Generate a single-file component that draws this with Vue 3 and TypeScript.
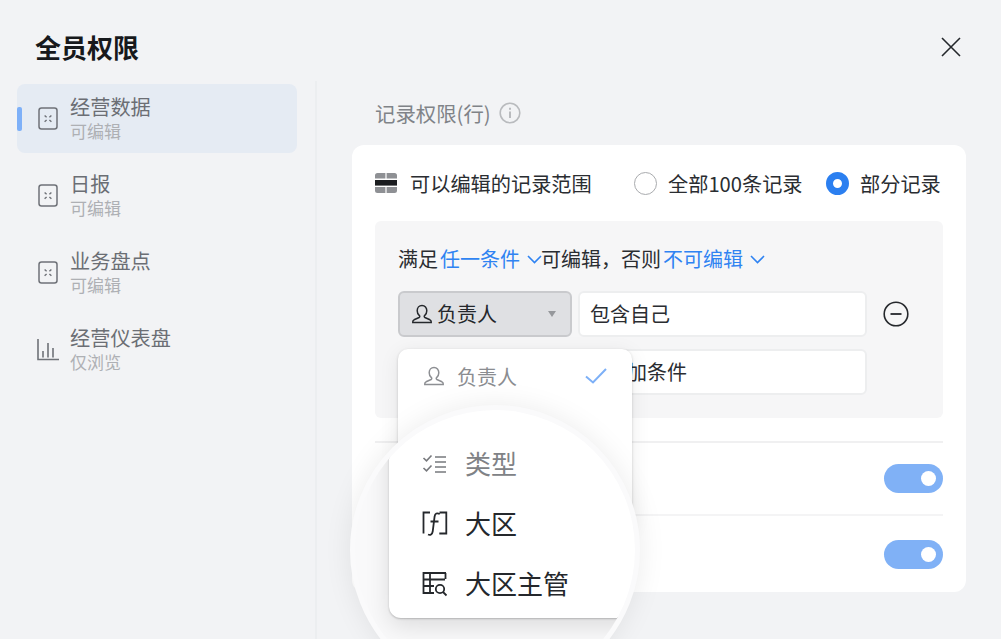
<script setup lang="ts">
interface NavItem { title: string; sub: string; icon: 'sheet' | 'chart'; active?: boolean }
const nav: NavItem[] = [
  { title: '经营数据', sub: '可编辑', icon: 'sheet', active: true },
  { title: '日报', sub: '可编辑', icon: 'sheet' },
  { title: '业务盘点', sub: '可编辑', icon: 'sheet' },
  { title: '经营仪表盘', sub: '仅浏览', icon: 'chart' },
]
const personPath = 'M10 1.500c-2.900 0-4.800 2.200-4.800 5.200 0 2.100 1 3.900 2.200 4.900.6.500.4 1.500-.3 1.900l-5 2.300c-.8.400-1.300 1-1.300 1.900v.8h18.400v-.8c0-.9-.5-1.500-1.300-1.900l-5-2.300c-.7-.4-.9-1.400-.3-1.900 1.200-1 2.200-2.800 2.200-4.900 0-3-1.900-5.200-4.800-5.200z'
</script>

<template>
  <div class="page">
    <header class="head">
      <h1 class="title">全员权限</h1>
      <svg class="close" width="20" height="20" viewBox="0 0 20 20" fill="none" stroke="#24272b" stroke-width="1.6"><path d="M1 1l18 18M19 1L1 19" /></svg>
    </header>
    <div class="body">
      <aside class="side">
        <div v-for="n in nav" :key="n.title" class="nav" :class="{ active: n.active }">
          <i v-if="n.active" class="mark"></i>
          <svg v-if="n.icon === 'sheet'" class="nav-ico" width="20" height="23" viewBox="0 0 20 23" fill="none" stroke="#6f7278">
            <rect x="1" y="1" width="18" height="21" rx="2.5" stroke-width="1.5" />
            <path d="M6.600 8.400l2 1.800M13.400 8.400l-2 1.800M6.600 14.800l2-1.800M13.400 14.800l-2-1.800" stroke-width="1.4" />
          </svg>
          <svg v-else class="nav-ico" width="22" height="22" viewBox="0 0 22 22" fill="none" stroke="#6f7278" stroke-width="1.6">
            <path d="M1 0v20.500h21M6 12v6.500M11 4v14.500M16 9v9.500" />
          </svg>
          <div class="nav-text">
            <div class="nav-title">{{ n.title }}</div>
            <div class="nav-sub">{{ n.sub }}</div>
          </div>
        </div>
      </aside>
      <main class="main">
        <div class="sec-title">
          <span>记录权限(行)</span>
          <svg width="22" height="22" viewBox="0 0 22 22" fill="none" stroke="#b9bbbe" stroke-width="1.6">
            <circle cx="11" cy="11" r="9.800" />
            <path d="M11 9.500v6.500M11 5.800v2" stroke-width="2" />
          </svg>
        </div>
        <section class="card">
          <div class="scope">
            <svg class="scope-ico" width="22" height="20" viewBox="0 0 22 20">
              <path d="M2.500 0h7.900v5.600H0V2.500A2.500 2.500 0 0 1 2.500 0zM11.600 0h7.900A2.500 2.500 0 0 1 22 2.500v3.100H11.600zM0 14h10.400v6H2.500A2.500 2.500 0 0 1 0 17.500zM11.600 14H22v3.500a2.500 2.500 0 0 1-2.500 2.500h-7.900z" fill="#8e9094" />
              <rect x="0" y="7" width="22" height="5.600" fill="#1b1d20" />
            </svg>
            <span class="scope-label">可以编辑的记录范围</span>
            <span class="radio"></span>
            <span class="radio-label first">全部100条记录</span>
            <span class="radio on"></span>
            <span class="radio-label">部分记录</span>
          </div>
          <div class="cond">
            <div class="rule">
              满足<span class="link">任一条件</span>
              <svg class="chev" width="15" height="9" viewBox="0 0 15 9" fill="none" stroke="#2f83f2" stroke-width="1.6"><path d="M1 1l6.500 6.500L14 1" /></svg>
              可编辑，否则<span class="link">不可编辑</span>
              <svg class="chev2" width="15" height="9" viewBox="0 0 15 9" fill="none" stroke="#2f83f2" stroke-width="1.600"><path d="M1 1l6.500 6.500L14 1" /></svg>
            </div>
            <div class="row">
              <div class="select">
                <svg width="20" height="20" viewBox="0 0 20 20" fill="none" stroke="#25282c" stroke-width="1.500"><path :d="personPath" /></svg>
                <span class="sel-text">负责人</span>
                <i class="caret"></i>
              </div>
              <div class="input">包含自己</div>
              <svg class="minus" width="26" height="26" viewBox="0 0 26 26" fill="none" stroke="#25282c" stroke-width="1.600">
                <circle cx="13" cy="13" r="11.800" />
                <path d="M7.500 13h11" stroke-width="1.800" />
              </svg>
            </div>
            <div class="row">
              <div class="select ghost"></div>
              <div class="input add">添加条件</div>
            </div>
          </div>
          <div class="opt"><span class="toggle"><i></i></span></div>
          <div class="opt"><span class="toggle"><i></i></span></div>
        </section>
        <div class="sec-title next"><span>字段权限(列)</span></div>
      </main>
    </div>

    <div class="drop">
      <div class="drop-row">
        <svg width="20" height="20" viewBox="0 0 20 20" fill="none" stroke="#8d8f93" stroke-width="1.500"><path :d="personPath" /></svg>
        <span class="drop-text">负责人</span>
        <svg class="check" width="22" height="16" viewBox="0 0 22 16" fill="none" stroke="#7db0f7" stroke-width="2"><path d="M1 8.500l7 6L21 1" /></svg>
      </div>
    </div>

    <div class="lens">
      <div class="lens-menu">
        <div class="lens-row muted">
          <svg width="26" height="20" viewBox="0 0 26 20" fill="none" stroke="#77797d" stroke-width="1.600">
            <path d="M1.500 4l3 2.800L9.500 1.500M1.500 14l3 2.800 5-5.300M13 3h11M13 8h11M13 13h11M13 18h11" />
          </svg>
          <span>类型</span>
        </div>
        <div class="lens-row">
          <svg width="26" height="26" viewBox="0 0 26 26" fill="none" stroke="#25282c" stroke-width="1.800">
            <path d="M8 1.500H1.500v21M17.500 1.500h6.800v21h-7" />
            <path d="M17.800 3c-2.800-1.500-4.700-.5-5.200 2.500L10.700 20.500c-.5 3-2.400 4-4.700 3M8.500 10.500h8" />
          </svg>
          <span>大区</span>
        </div>
        <div class="lens-row">
          <svg width="26" height="26" viewBox="0 0 26 26" fill="none" stroke="#25282c" stroke-width="1.800">
            <path d="M24 2H1.500v20H12M1.500 8.500H14M1.500 15H12M8 2v20M14 8.500h9M23.500 2v6" />
            <circle cx="18" cy="18" r="4.200" />
            <path d="M21 21l3.500 3.500" />
          </svg>
          <span>大区主管</span>
        </div>
      </div>
    </div>
  </div>
</template>

<style>
html, body { margin: 0; overflow: hidden; }
</style>

<style scoped>
.page {
  position: relative;
  width: 1001px;
  height: 639px;
  overflow: hidden;
  background: #f2f3f5;
  font-family: "Noto Sans CJK SC", "Noto Sans", sans-serif;
  color: #24272b;
}
.head {
  height: 81px;
  padding: 13px 40px 0 35px;
  box-sizing: border-box;
  display: flex;
  align-items: center;
  justify-content: space-between;
}
.title {
  margin: 0;
  font-size: 26px;
  line-height: 36px;
  font-weight: 700;
  color: #17191c;
}
.body { display: flex; height: 558px; }
.side {
  flex: none;
  width: 317px;
  box-sizing: border-box;
  padding: 3px 18px 0 17px;
  border-right: 2px solid #eceef0;
  display: flex;
  flex-direction: column;
  gap: 8px;
}
.nav {
  position: relative;
  height: 69px;
  box-sizing: border-box;
  border-radius: 8px;
  display: flex;
  align-items: center;
  padding-left: 20px;
}
.nav.active { background: #e5ebf3; }
.mark {
  position: absolute;
  left: 0;
  top: 23px;
  width: 5px;
  height: 24px;
  border-radius: 2px;
  background: #7eb0f8;
}
.nav-ico { flex: none; width: 22px; }
.nav-text { margin: 0 0 2px 11px; }
.nav-title { font-size: 20.200px; line-height: 26px; color: #6b6e74; }
.nav-sub { font-size: 17px; line-height: 22px; color: #aeb0b4; }
.main { flex: 1; min-width: 0; padding: 0 35px; }
.sec-title {
  height: 64px;
  padding: 0 0 1px 23px;
  box-sizing: border-box;
  display: flex;
  align-items: center;
  gap: 8px;
  font-size: 20.400px;
  color: #808388;
}
.sec-title.next { height: 30px; margin-top: 37px; padding-top: 10px; align-items: flex-start; }
.card {
  height: 447px;
  box-sizing: border-box;
  padding: 0 23px;
  background: #fff;
  border-radius: 12px;
}
.scope {
  height: 76px;
  display: flex;
  align-items: center;
  font-size: 20.200px;
  color: #2a2d31;
}
.scope-ico { flex: none; }
.scope-label { flex: none; margin-left: 13px; width: 224px; }
.radio {
  flex: none;
  width: 23px;
  height: 23px;
  box-sizing: border-box;
  border: 1.500px solid #a9abae;
  border-radius: 50%;
  background: #fff;
}
.radio.on { border: 7.500px solid #2b7ff0; }
.radio-label { flex: none; margin-left: 11px; white-space: nowrap; }
.radio-label.first { width: 134px; margin-right: 24px; }
.cond {
  height: 197px;
  box-sizing: border-box;
  padding: 24px 23px 0;
  background: #f6f6f7;
  border-radius: 6px;
}
.rule {
  height: 28px;
  display: flex;
  align-items: center;
  font-size: 20px;
  line-height: 28px;
  color: #2a2d31;
  white-space: nowrap;
}
.link { color: #2f83f2; margin-left: 2px; }
.chev { margin: 0 -1px 0 7px; }
.chev2 { margin-left: 7px; }
.row { display: flex; align-items: center; gap: 6px; margin-top: 12px; }
.rule + .row { margin-top: 18px; }
.select {
  flex: none;
  width: 174px;
  height: 46px;
  box-sizing: border-box;
  padding: 0 14px 0 12px;
  background: #dfe0e3;
  border: 2px solid #c9cacd;
  border-radius: 6px;
  display: flex;
  align-items: center;
  font-size: 20px;
}
.select.ghost { visibility: hidden; }
.sel-text { margin: 0 0 2px 5px; flex: 1; }
.caret {
  width: 0;
  height: 0;
  border-left: 4px solid transparent;
  border-right: 4px solid transparent;
  border-top: 6px solid #96989c;
}
.input {
  flex: none;
  width: 289px;
  height: 46px;
  box-sizing: border-box;
  padding: 0 0 2px 10px;
  background: #fff;
  border: 2px solid #edeeef;
  border-radius: 6px;
  display: flex;
  align-items: center;
  font-size: 20px;
  color: #2a2d31;
}
.input.add { padding-left: 27px; }
.minus { margin-left: 10px; }
.opt {
  height: 76px;
  display: flex;
  align-items: center;
  justify-content: flex-end;
  box-sizing: border-box;
}
.cond + .opt {
  margin-top: 23px;
  height: 75px;
  border-top: 2px solid #f0f0f1;
  border-bottom: 2px solid #f4f4f5;
}
.toggle {
  position: relative;
  width: 59px;
  height: 29px;
  border-radius: 15px;
  background: #80b1f6;
}
.toggle i {
  position: absolute;
  right: 7px;
  top: 7px;
  width: 15px;
  height: 15px;
  border-radius: 50%;
  background: #fff;
}
.drop {
  position: absolute;
  left: 398px;
  top: 349px;
  width: 234px;
  height: 180px;
  box-sizing: border-box;
  background: #fff;
  border-radius: 10px;
  box-shadow: 0 1px 3px rgba(0, 0, 0, .18), 0 4px 20px rgba(0, 0, 0, .08);
}
.drop-row {
  height: 54px;
  display: flex;
  align-items: center;
  padding: 0 25px 0 26px;
}
.drop-text { margin-left: 13px; flex: 1; font-size: 20px; color: #8b8d91; }
.lens {
  position: absolute;
  left: 350px;
  top: 405px;
  width: 290px;
  height: 290px;
  box-sizing: border-box;
  border: 5px solid #fafafb;
  border-radius: 50%;
  background: #f9f9fa;
  overflow: hidden;
  box-shadow: 0 0 28px rgba(0, 0, 0, .08);
}
.lens-menu {
  position: absolute;
  left: 34px;
  top: -10px;
  width: 300px;
  height: 218px;
  box-sizing: border-box;
  padding: 34px 0 0 33px;
  background: #fff;
  border-radius: 12px;
  box-shadow: 0 1px 2px rgba(0, 0, 0, .22), 0 8px 24px rgba(0, 0, 0, .12);
}
.lens-row {
  height: 60px;
  display: flex;
  align-items: center;
  font-size: 26px;
  color: #25282c;
}
.lens-row svg { flex: none; width: 26px; margin-right: 17px; }
.lens-row span { margin-bottom: 4px; }
.lens-row.muted { color: #808286; }
</style>
